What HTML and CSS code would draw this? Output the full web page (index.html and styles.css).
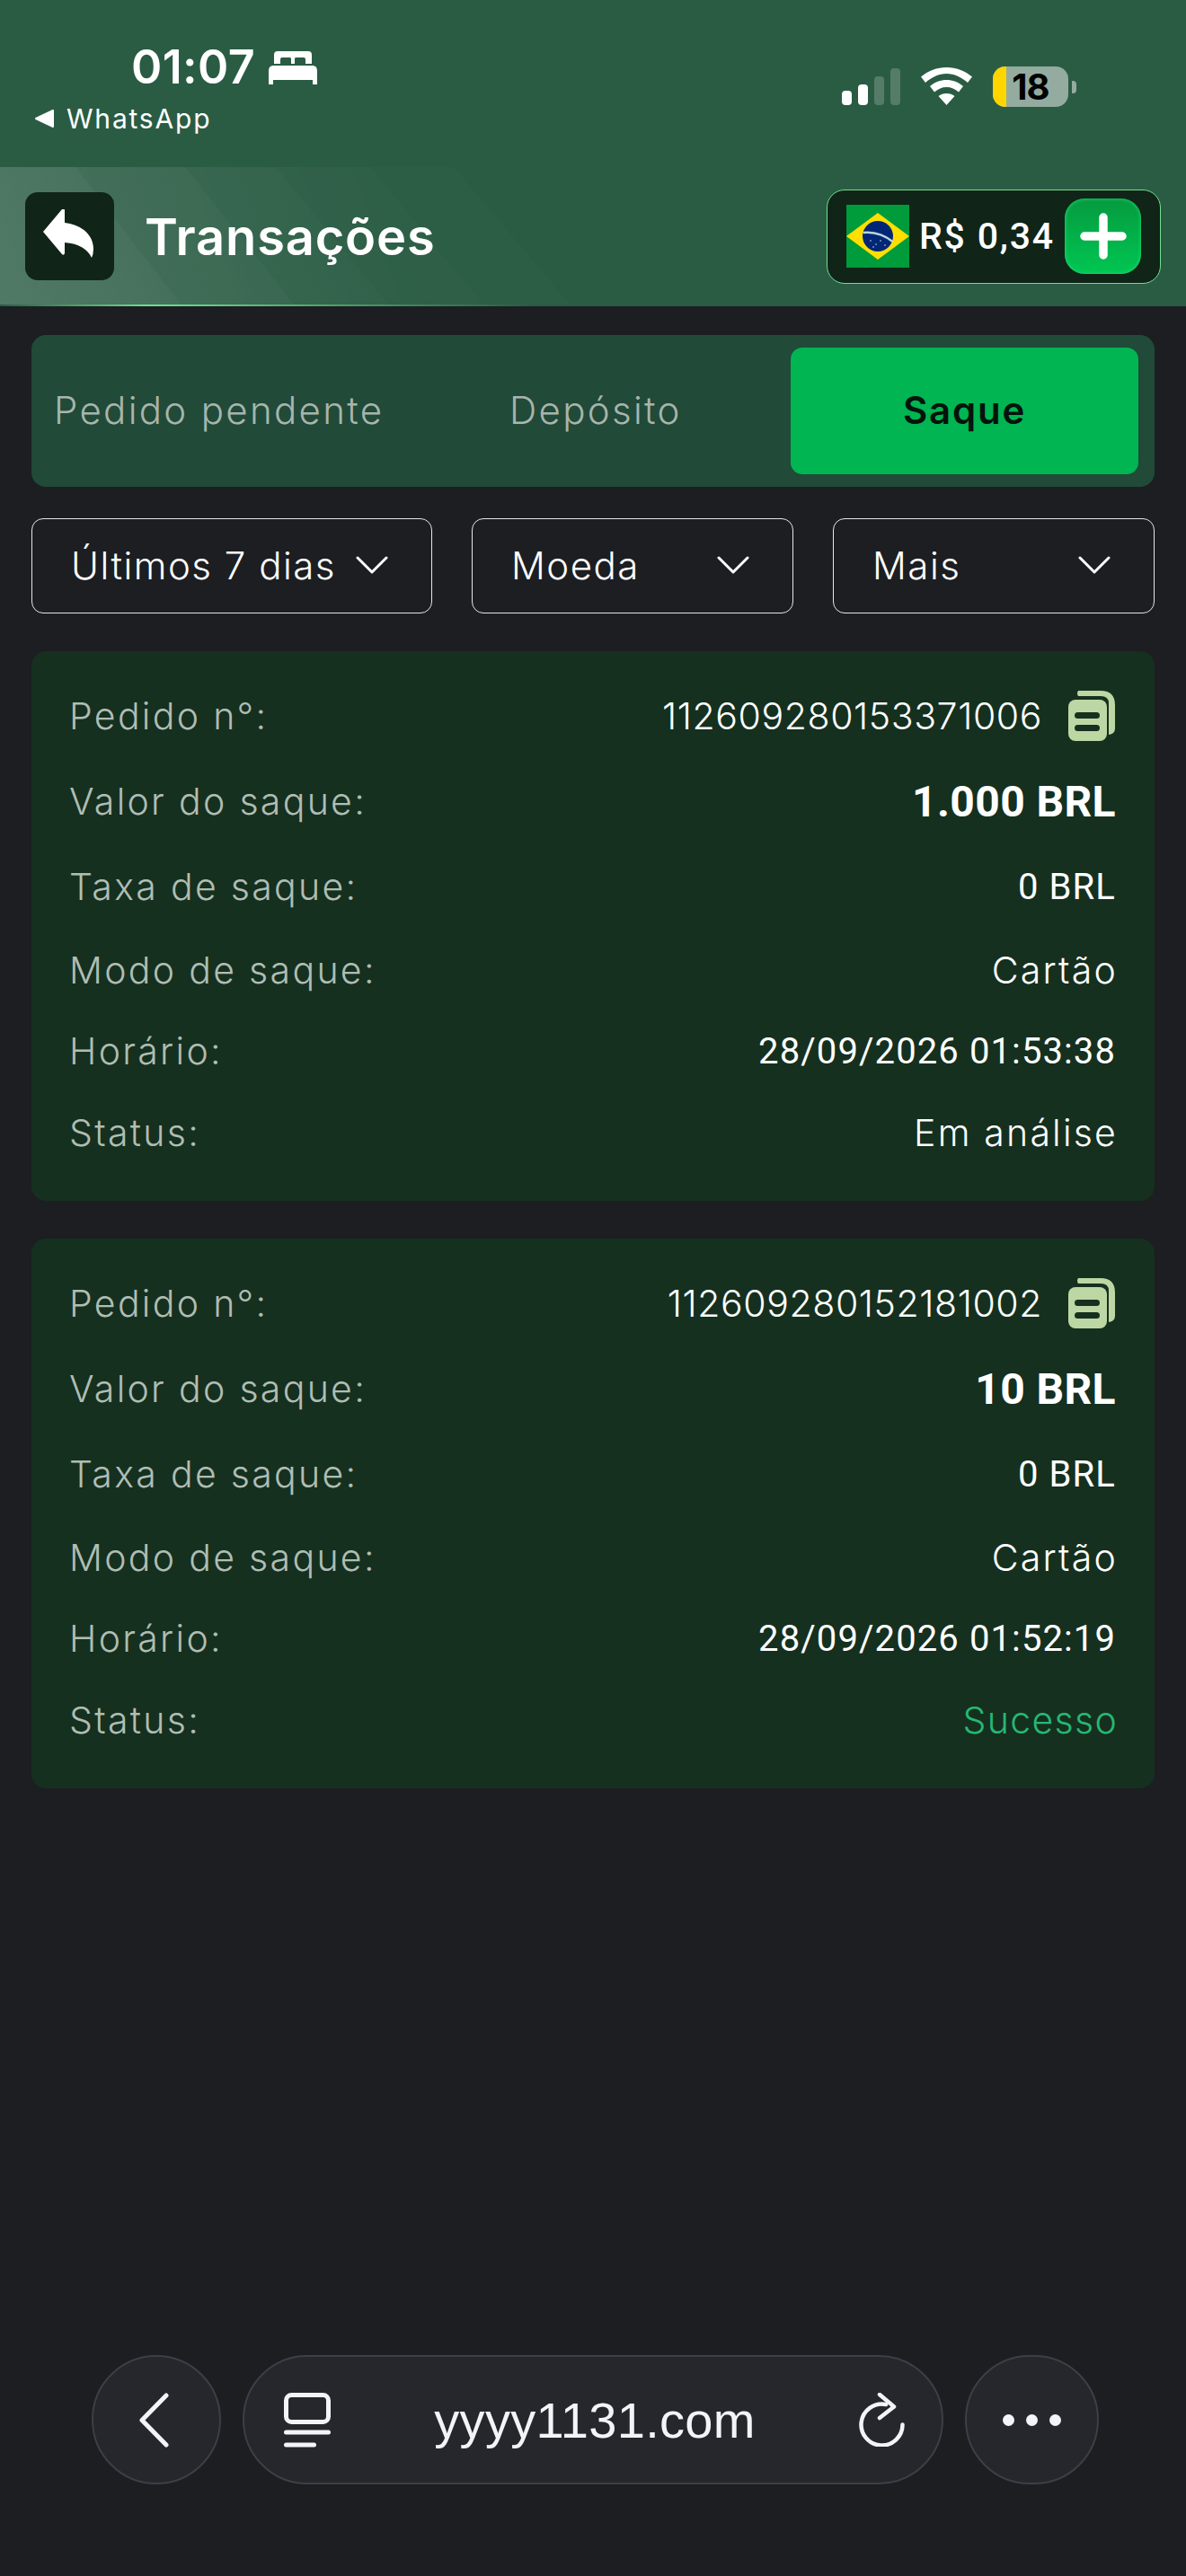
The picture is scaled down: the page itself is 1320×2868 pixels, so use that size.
FILE: index.html
```html
<!DOCTYPE html>
<html lang="en">
<head>
    <meta charset="UTF-8">
    <meta name="viewport" content="width=device-width, initial-scale=1.0">
    <title>Transações</title>
    <link rel="stylesheet" href="styles.css">
</head>
<body>
<header class="top">
    <svg class="stripes" viewBox="0 0 660 154">
        <defs>
            <linearGradient id="sheen" gradientUnits="userSpaceOnUse" x1="0" y1="154" x2="420" y2="0">
                <stop offset="0" stop-color="#fff" stop-opacity=".04"/>
                <stop offset="1" stop-color="#fff" stop-opacity=".01"/>
            </linearGradient>
        </defs>
        <polygon points="0,0 84,0 202,154 0,154" fill="url(#sheen)"/>
        <polygon points="0,0 206,0 328,154 0,154" fill="url(#sheen)"/>
        <polygon points="0,0 307,0 433,154 0,154" fill="url(#sheen)"/>
        <polygon points="0,0 412,0 539,154 0,154" fill="url(#sheen)"/>
        <polygon points="0,0 505,0 635,154 0,154" fill="url(#sheen)"/>
    </svg>
    <div class="status-bar">
        <div class="status-left">
            <div class="clock">
                <span>01:07</span>
                <svg class="bed" viewBox="0 0 54 37" fill="#fff"><path d="M6 4q0-4 4-4h34q4 0 4 4v10h-7V9q0-2-2-2h-9q-1 0-1 2v5h-4V9q0-2-1-2h-9q-2 0-2 2v5H6z"/><path d="M5 16h44q5 0 5 6v15h-5v-5H5v5H0V22q0-6 5-6z"/></svg>
            </div>
            <div class="back-app">
                <svg class="back-tri" viewBox="0 0 22 22" fill="#fff"><path d="M21 2v18L2 11z" stroke="#fff" stroke-width="2" stroke-linejoin="round"/></svg>
                <span>WhatsApp</span>
            </div>
        </div>
        <div class="status-right">
            <div class="signal"><i class="on s1"></i><i class="on s2"></i><i class="s3"></i><i class="s4"></i></div>
            <svg class="wifi" viewBox="0 0 57 42" fill="#fff"><path d="M28.500 0C39 0 49 4 57 10.500L52 17C45 11 37 7 28.500 7S12 11 5 17L0 10.500C8 4 18 0 28.500 0z"/><path d="M28.500 14C35 14 42 16.500 47 21L42 27.500C38 24 33.500 22 28.500 22S19 24 15 27.500L10 21C15 16.500 22 14 28.500 14z"/><path d="M28.500 29C32 29 35 30 37.500 32L28.500 42 19.500 32C22 30 25 29 28.500 29z"/></svg>
            <div class="battery">
                <div class="battery-body"><span class="battery-level"></span><span class="battery-num">18</span></div>
                <span class="battery-tip"></span>
            </div>
        </div>
    </div>
    <div class="nav">
        <div class="nav-left">
            <div class="back-btn">
                <svg viewBox="0 0 56 54" fill="#fff"><path d="M21 0q3-1 3 1v14c18 2 32 13 32 29q0 6-2 10c-4-9-14-16-30-17v12q-1 3-3 1L0 25z"/></svg>
            </div>
            <h1 class="title">Transações</h1>
        </div>
        <div class="wallet">
            <svg class="flag" viewBox="0 0 70 70">
                <rect width="70" height="70" fill="#009b3a"/>
                <path d="M35 9 70 35 35 61 0 35z" fill="#fedf00"/>
                <circle cx="35" cy="35" r="17" fill="#002776"/>
                <path d="M18.500 31q18-2 33 10" stroke="#b9d3e0" stroke-width="2.500" fill="none"/>
                <g fill="#cfe0ee"><circle cx="27" cy="40" r=".8"/><circle cx="33" cy="44" r=".8"/><circle cx="38" cy="40" r=".8"/><circle cx="43" cy="45" r=".8"/><circle cx="30" cy="47" r=".8"/></g>
            </svg>
            <span class="amount">R$ 0,34</span>
            <div class="add-btn">
                <svg viewBox="0 0 52 52"><path d="M26 5v42M5 26h42" stroke="#fff" stroke-width="9.500" stroke-linecap="round"/></svg>
            </div>
        </div>
    </div>
</header>

<main class="content">
    <div class="tabs">
        <div class="tab tab-pending">Pedido pendente</div>
        <div class="tab tab-deposit">Depósito</div>
        <div class="tab tab-active">Saque</div>
    </div>

    <div class="filters">
        <div class="filter filter-wide"><span>Últimos 7 dias</span><svg class="chev" viewBox="0 0 36 22"><path d="M2 3l16 16L34 3" fill="none" stroke="#fff" stroke-width="3" stroke-linecap="round" stroke-linejoin="round"/></svg></div>
        <div class="filter"><span>Moeda</span><svg class="chev" viewBox="0 0 36 22"><path d="M2 3l16 16L34 3" fill="none" stroke="#fff" stroke-width="3" stroke-linecap="round" stroke-linejoin="round"/></svg></div>
        <div class="filter"><span>Mais</span><svg class="chev" viewBox="0 0 36 22"><path d="M2 3l16 16L34 3" fill="none" stroke="#fff" stroke-width="3" stroke-linecap="round" stroke-linejoin="round"/></svg></div>
    </div>

    <section class="card">
        <div class="row row-order"><span class="label">Pedido n°:</span><span class="id-wrap"><span class="id-value">112609280153371006</span><svg class="copy" viewBox="0 0 52 56"><path d="M11 0H36Q52 0 52 16V42Q52 48 45 49V14Q45 6 36 6H11Q9 3 11 0z" fill="#bcd7a3"/><rect x="0" y="10" width="43" height="46" rx="8" fill="#bcd7a3"/><path d="M10.500 27.500h21M10.500 41.500h21" stroke="#15301f" stroke-width="7" stroke-linecap="round"/></svg></span></div>
        <div class="row row-amount"><span class="label">Valor do saque:</span><span class="amount-value">1.000 BRL</span></div>
        <div class="row row-fee"><span class="label">Taxa de saque:</span><span class="num-value">0 BRL</span></div>
        <div class="row row-mode"><span class="label">Modo de saque:</span><span class="value">Cartão</span></div>
        <div class="row row-time"><span class="label">Horário:</span><span class="num-value">28/09/2026 01:53:38</span></div>
        <div class="row row-status"><span class="label">Status:</span><span class="value">Em análise</span></div>
    </section>

    <section class="card">
        <div class="row row-order"><span class="label">Pedido n°:</span><span class="id-wrap"><span class="id-value">112609280152181002</span><svg class="copy" viewBox="0 0 52 56"><path d="M11 0H36Q52 0 52 16V42Q52 48 45 49V14Q45 6 36 6H11Q9 3 11 0z" fill="#bcd7a3"/><rect x="0" y="10" width="43" height="46" rx="8" fill="#bcd7a3"/><path d="M10.500 27.500h21M10.500 41.500h21" stroke="#15301f" stroke-width="7" stroke-linecap="round"/></svg></span></div>
        <div class="row row-amount"><span class="label">Valor do saque:</span><span class="amount-value">10 BRL</span></div>
        <div class="row row-fee"><span class="label">Taxa de saque:</span><span class="num-value">0 BRL</span></div>
        <div class="row row-mode"><span class="label">Modo de saque:</span><span class="value">Cartão</span></div>
        <div class="row row-time"><span class="label">Horário:</span><span class="num-value">28/09/2026 01:52:19</span></div>
        <div class="row row-status"><span class="label">Status:</span><span class="value value-ok">Sucesso</span></div>
    </section>
</main>

<footer class="browser-bar">
    <div class="round-btn">
        <svg class="back-chev" viewBox="0 0 34 61"><path d="M31 3 4 30.500 31 58" fill="none" stroke="#f4f4f8" stroke-width="5" stroke-linecap="round" stroke-linejoin="round"/></svg>
    </div>
    <div class="url-pill">
        <svg class="tabs-icon" viewBox="0 0 52 61"><rect x="2.500" y="2.500" width="47" height="30" rx="6" fill="none" stroke="#f4f4f8" stroke-width="5"/><path d="M2.500 44h47M2.500 58h31" stroke="#f4f4f8" stroke-width="5" stroke-linecap="round"/></svg>
        <span class="url">yyyy1131.com</span>
        <svg class="reload" viewBox="0 0 51 60"><path d="M30 13A23 23 0 1 0 48.500 35.500" fill="none" stroke="#f4f4f8" stroke-width="4.500" stroke-linecap="round"/><path d="M23 2 39 15.500 23 28" fill="none" stroke="#f4f4f8" stroke-width="4.500" stroke-linecap="round" stroke-linejoin="round"/></svg>
    </div>
    <div class="round-btn round-btn-more">
        <div class="dots"><i></i><i></i><i></i></div>
    </div>
</footer>
</body>
</html>
```

FILE: styles.css
```css
* {
    box-sizing: border-box;
}
html, body {
    margin: 0;
    padding: 0;
}
body {
    width: 1320px;
    height: 2868px;
    background: #1c1e22;
    color: #fff;
    font-family: "Inter", "Noto Sans", sans-serif;
    position: relative;
    overflow: hidden;
}

/* Green header with status bar */
.top {
    height: 341px;
    background: #2a5c44;
    position: relative;
    overflow: hidden;
}
.top::after {
    content: "";
    position: absolute;
    left: 0;
    bottom: 0;
    width: 660px;
    height: 2px;
    background: linear-gradient(90deg, #2a5c44 0%, #6fe08f 25%, #2a5c44 90%);
}
.stripes {
    position: absolute;
    left: 0;
    top: 186px;
    width: 660px;
    height: 154px;
}
.status-bar {
    height: 186px;
    padding: 48px 122px 0 38px;
    display: flex;
    justify-content: space-between;
    position: relative;
}
.status-left {
    display: flex;
    flex-direction: column;
    gap: 12px;
}
.clock {
    display: flex;
    align-items: center;
    gap: 15px;
    padding-left: 108px;
    font-size: 52px;
    font-weight: 600;
    line-height: 54px;
    letter-spacing: .4px;
}
.bed {
    width: 54px;
    height: 37px;
}
.back-app {
    display: flex;
    align-items: center;
    gap: 14px;
    font-size: 30px;
    line-height: 36px;
    letter-spacing: 1.800px;
}
.back-tri {
    width: 22px;
    height: 22px;
}
.status-right {
    display: flex;
    align-items: flex-start;
    gap: 23px;
    padding-top: 26px;
}
.signal {
    display: flex;
    align-items: flex-end;
    gap: 7px;
    height: 41px;
    margin-top: 2px;
}
.signal i {
    display: block;
    width: 11px;
    border-radius: 4px;
    background: rgba(255,255,255,.2);
}
.signal .on {
    background: #fff;
}
.s1 { height: 16px; }
.s2 { height: 23px; }
.s3 { height: 32px; }
.s4 { height: 41px; }
.wifi {
    width: 57px;
    height: 42px;
    margin-top: 1px;
}
.battery {
    display: flex;
    align-items: center;
    gap: 4px;
}
.battery-body {
    width: 84px;
    height: 45px;
    border-radius: 14px;
    background: #93ac9f;
    display: flex;
}
.battery-level {
    width: 15px;
    background: #ffd500;
    border-radius: 14px 0 0 14px;
}
.battery-num {
    flex: 1;
    text-align: center;
    color: #000;
    font-size: 40px;
    line-height: 45px;
    font-weight: 700;
    letter-spacing: -1px;
    padding-right: 15px;
}
.battery-tip {
    width: 5px;
    height: 14px;
    background: #93ac9f;
    border-radius: 0 4px 4px 0;
}

.nav {
    display: flex;
    justify-content: space-between;
    align-items: center;
    padding: 0 28px;
    height: 154px;
    position: relative;
}
.nav-left {
    display: flex;
    align-items: center;
    gap: 34px;
}
.back-btn {
    width: 99px;
    height: 98px;
    border-radius: 14px;
    background: #102418;
    display: flex;
    align-items: center;
    justify-content: center;
}
.back-btn svg {
    width: 56px;
    height: 54px;
    margin-right: 3px;
    margin-bottom: 6px;
}
.title {
    margin: 2px 0 0;
    font-size: 56px;
    font-weight: 600;
    line-height: 1;
    letter-spacing: .8px;
}
.wallet {
    width: 372px;
    height: 105px;
    border: 1.500px solid #6fe08f;
    border-radius: 20px;
    background: #102418;
    display: flex;
    align-items: center;
    padding: 0 21px;
}
.flag {
    width: 70px;
    height: 70px;
    flex: none;
}
.amount {
    margin-left: 11px;
    font-family: "Roboto", sans-serif;
    font-size: 41px;
    font-weight: 500;
    white-space: nowrap;
    letter-spacing: 1.800px;
}
.add-btn {
    margin-left: auto;
    width: 85px;
    height: 84px;
    border-radius: 22px;
    background: linear-gradient(180deg, #059a3f, #00c652);
    box-shadow: inset 0 0 4px #24e07a;
    display: flex;
    align-items: center;
    justify-content: center;
    flex: none;
}
.add-btn svg {
    width: 52px;
    height: 52px;
}

/* Tabs and filters */
.content {
    padding: 32px 35px 0;
}
.tabs {
    height: 169px;
    border-radius: 16px;
    background: #214a38;
    display: flex;
    align-items: center;
    padding: 0 16px 0 25px;
    font-size: 42px;
    letter-spacing: 2.300px;
    color: #a7b5ad;
    font-weight: 300;
}
.tab-pending {
    width: 507px;
    margin-bottom: 2px;
}
.tab-deposit {
    width: 313px;
    margin-bottom: 2px;
}
.tab-active {
    width: 387px;
    height: 141px;
    padding-bottom: 2px;
    border-radius: 13px;
    background: #00b552;
    color: #04130b;
    font-weight: 600;
    letter-spacing: 1.800px;
    display: flex;
    align-items: center;
    justify-content: center;
}
.filters {
    display: flex;
    gap: 44px;
    margin-top: 35px;
}
.filter {
    width: 358px;
    height: 106px;
    border: 1.500px solid #e6e6e6;
    border-radius: 13px;
    display: flex;
    align-items: center;
    justify-content: space-between;
    padding: 0 48px 2px 43px;
    font-size: 42px;
    font-weight: 300;
    letter-spacing: 1.500px;
}
.filter-wide {
    width: 446px;
}
.chev {
    width: 36px;
    height: 22px;
}

/* Transaction cards */
.card {
    height: 612px;
    margin-top: 42px;
    border-radius: 16px;
    background: #15301f;
    padding: 24px 43px 0 42px;
    display: flex;
    flex-direction: column;
}
.row {
    display: flex;
    justify-content: space-between;
    align-items: center;
    font-size: 41px;
    font-weight: 300;
}
.row-order { height: 96px; }
.row-amount { height: 94px; }
.row-fee { height: 96px; }
.row-mode { height: 90px; }
.row-time { height: 90px; }
.row-status { height: 92px; }
.label {
    color: #b0bdb4;
    letter-spacing: 2.300px;
}
.value {
    letter-spacing: 2.200px;
    margin-right: -2px;
}
.id-wrap {
    display: flex;
    align-items: center;
}
.id-value {
    letter-spacing: .6px;
}
.amount-value {
    font-family: "Roboto", sans-serif;
    font-size: 48px;
    font-weight: 700;
    letter-spacing: .4px;
}
.num-value {
    font-family: "Roboto", sans-serif;
    font-size: 40px;
    font-weight: 400;
    letter-spacing: 1.100px;
}
.value-ok {
    color: #26b874;
    letter-spacing: 1.300px;
}
.copy {
    width: 52px;
    height: 56px;
    margin-left: 29px;
    margin-right: 1px;
}

/* Safari bottom bar */
.browser-bar {
    position: absolute;
    left: 102px;
    top: 2622px;
    display: flex;
    gap: 24px;
}
.round-btn {
    width: 144px;
    height: 144px;
    border-radius: 72px;
    background: #25272c;
    border: 2px solid #3d3f46;
    display: flex;
    align-items: center;
    justify-content: center;
}
.round-btn-more {
    width: 149px;
}
.back-chev {
    width: 34px;
    height: 61px;
    margin-right: 7px;
}
.url-pill {
    width: 780px;
    height: 144px;
    border-radius: 72px;
    background: #25272c;
    border: 2px solid #3d3f46;
    display: flex;
    align-items: center;
    justify-content: space-between;
    padding: 0 41px 0 44px;
}
.url {
    font-family: "Liberation Sans", sans-serif;
    font-size: 56px;
    letter-spacing: .3px;
    color: #f4f4f8;
}
.tabs-icon {
    width: 52px;
    height: 61px;
}
.reload {
    width: 51px;
    height: 60px;
}
.dots {
    display: flex;
    gap: 13px;
}
.dots i {
    display: block;
    width: 13px;
    height: 13px;
    border-radius: 50%;
    background: #f4f4f8;
}
```
